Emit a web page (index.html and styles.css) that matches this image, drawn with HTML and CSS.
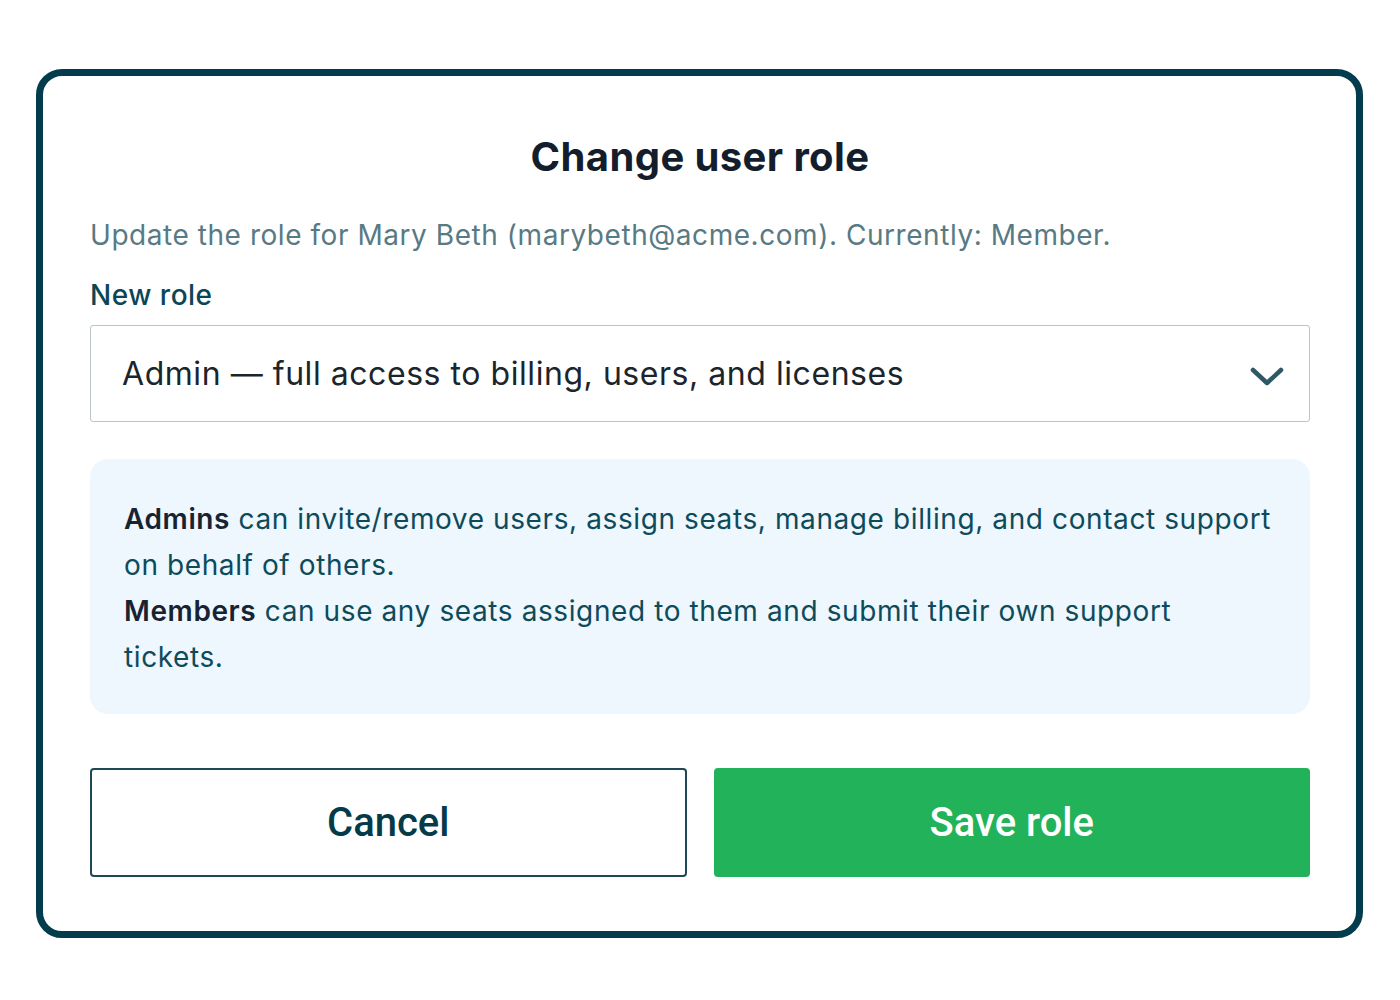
FILE: index.html
```html
<!DOCTYPE html>
<html lang="en">
<head>
  <meta charset="UTF-8">
  <meta name="viewport" content="width=device-width, initial-scale=1.0">
  <title>Change user role</title>
  <link rel="stylesheet" href="styles.css">
</head>
<body>
  <div class="modal">
    <h1 class="modal-title">Change user role</h1>
    <p class="modal-desc">Update the role for Mary Beth (marybeth@acme.com). Currently: Member.</p>

    <label class="field-label" for="roleSelect">New role</label>
    <div class="select-wrap">
      <select id="roleSelect" class="role-select">
        <option selected>Admin — full access to billing, users, and licenses</option>
        <option>Member — use assigned seats and submit support tickets</option>
      </select>
      <svg class="select-chevron" width="34" height="20" viewBox="0 0 34 20" aria-hidden="true">
        <path d="M3 3 L17 16 L31 3" fill="none" stroke="#2f5866" stroke-width="4.5" stroke-linecap="round" stroke-linejoin="round"/>
      </svg>
    </div>

    <div class="role-info">
      <p><strong>Admins</strong> can invite/remove users, assign seats, manage billing, and contact support on behalf of others.</p>
      <p><strong>Members</strong> can use any seats assigned to them and submit their own support tickets.</p>
    </div>

    <div class="modal-actions">
      <button type="button" class="btn btn-secondary">Cancel</button>
      <button type="button" class="btn btn-primary">Save role</button>
    </div>
  </div>
</body>
</html>
```

FILE: styles.css
```css
* {
  margin: 0;
  padding: 0;
  box-sizing: border-box;
}
body {
  font-family: Inter, 'Noto Sans', sans-serif;
  background-color: #fff;
  color: #0d4b5a;
  padding: 69px 37px 0 36px;
}
.modal {
  width: 1327px;
  height: 869px;
  border: 7px solid #033d4d;
  border-radius: 26px;
  padding: 57px 46px 0 47px;
  display: flex;
  flex-direction: column;
}
.modal-title {
  text-align: center;
  font-size: 40px;
  line-height: 48px;
  font-weight: 700;
  letter-spacing: 0.4px;
  color: #141d2b;
}
.modal-desc {
  margin-top: 36px;
  font-size: 28px;
  line-height: 36px;
  letter-spacing: 0.55px;
  color: #587a84;
}
.field-label {
  margin-top: 24px;
  font-size: 28px;
  line-height: 36px;
  font-weight: 500;
  letter-spacing: 0.5px;
  color: #0b4657;
}
.select-wrap {
  position: relative;
  margin-top: 12px;
}
.role-select {
  appearance: none;
  -webkit-appearance: none;
  width: 100%;
  height: 97px;
  padding: 0 80px 0 31px;
  border: 1px solid #b9c5c9;
  border-radius: 3px;
  background: #fff;
  font-family: Inter, 'Liberation Sans', sans-serif;
  font-size: 32px;
  letter-spacing: 0.55px;
  color: #1b252c;
  outline: none;
}
.select-chevron {
  position: absolute;
  right: 26px;
  top: 42px;
  pointer-events: none;
}
.role-info {
  margin-top: 37px;
  height: 255px;
  padding: 37px 36px 0 34px;
  background-color: #eef6fe;
  border-radius: 18px;
  font-size: 28px;
  line-height: 46px;
  letter-spacing: 0.6px;
  color: #0d4b5a;
}
.role-info strong {
  font-weight: 600;
  color: #172330;
}
.modal-actions {
  margin-top: 54px;
  display: grid;
  grid-template-columns: 1fr 1fr;
  gap: 27px;
}
.btn {
  height: 109px;
  font-family: Roboto, 'Liberation Sans', sans-serif;
  font-size: 40px;
  font-weight: 500;
  border-radius: 4px;
  cursor: pointer;
}
.btn-secondary {
  background-color: #fff;
  border: 2px solid #1d4856;
  color: #053a48;
}
.btn-primary {
  background-color: #22b25a;
  border: none;
  color: #fff;
}
```
